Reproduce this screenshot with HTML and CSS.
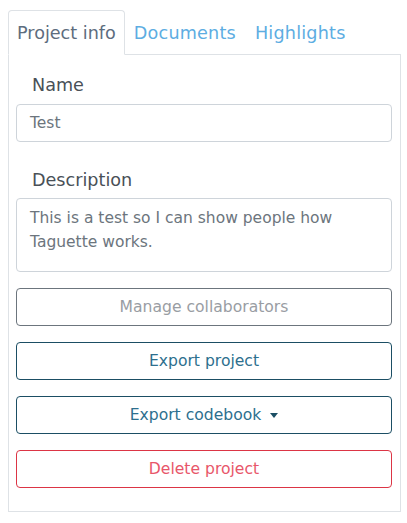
FILE: index.html
```html
<!DOCTYPE html>
<html lang="en">
<head>
<meta charset="utf-8">
<title>Project info</title>
<link rel="stylesheet" href="styles.css">
</head>
<body>
<div class="wrap">
  <ul class="tabs">
    <li class="tab active">Project info</li>
    <li class="tab">Documents</li>
    <li class="tab">Highlights</li>
  </ul>
  <div class="panel">
    <label class="label">Name</label>
    <div class="input">Test</div>
    <label class="label desc">Description</label>
    <div class="textarea">This is a test so I can show people how Taguette works.</div>
    <div class="btn btn-gray">Manage collaborators</div>
    <div class="btn btn-teal">Export project</div>
    <div class="btn btn-teal">Export codebook<span class="caret"></span></div>
    <div class="btn btn-red">Delete project</div>
  </div>
</div>
</body>
</html>
```
FILE: styles.css
```css
* { box-sizing: border-box; }
body {
  margin: 0;
  background: #fff;
  font-family: "DejaVu Sans", "Open Sans", sans-serif;
  font-size: 15.5px;
  line-height: 24px;
  color: #495057;
}
.wrap {
  padding: 10px 6px 0 8px;
}
.tabs {
  list-style: none;
  margin: 0;
  padding: 0;
  display: flex;
  border-bottom: 1px solid #dee2e6;
}
.tab {
  padding: 9px 9px 8px 8px;
  border: 1px solid transparent;
  border-radius: 4px 4px 0 0;
  margin-bottom: -1px;
  color: #5dade2;
  font-size: 17.6px;
  line-height: 26px;
  letter-spacing: 0.2px;
}
.tab.active {
  color: #5d6d7e;
  border-color: #dee2e6 #dee2e6 #fff;
  background: #fff;
  padding-right: 8px;
  letter-spacing: 0;
}
.panel {
  border: 1px solid #dee2e6;
  border-top: 0;
  padding: 17px 8px 23px 7px;
  display: flex;
  flex-direction: column;
}
.label {
  display: block;
  padding-left: 16px;
  margin-bottom: 6px;
  color: #495057;
  font-size: 17.6px;
  line-height: 26px;
}
.label.desc { margin-top: 25px; margin-bottom: 5px; }
.input, .textarea {
  border: 1px solid #ced4da;
  border-radius: 4px;
  padding: 6px 13px;
  color: #6c757d;
}
.input { height: 38px; }
.textarea { height: 74px; padding-top: 7px; }
.btn {
  margin-top: 16px;
  height: 38px;
  border: 1px solid;
  border-radius: 4px;
  display: flex;
  align-items: center;
  justify-content: center;
  font-size: 15.6px;
}
.btn-gray { border-color: #6c757d; color: #999da3; }
.btn-teal { border-color: #1b4e64; color: #2d6f8e; }
.btn-red { border-color: #dc3545; color: #e8566a; }
.caret {
  display: inline-block;
  margin-left: 9px;
  border-top: 5px solid #1b4e64;
  border-left: 4.5px solid transparent;
  border-right: 4.5px solid transparent;
}
```
